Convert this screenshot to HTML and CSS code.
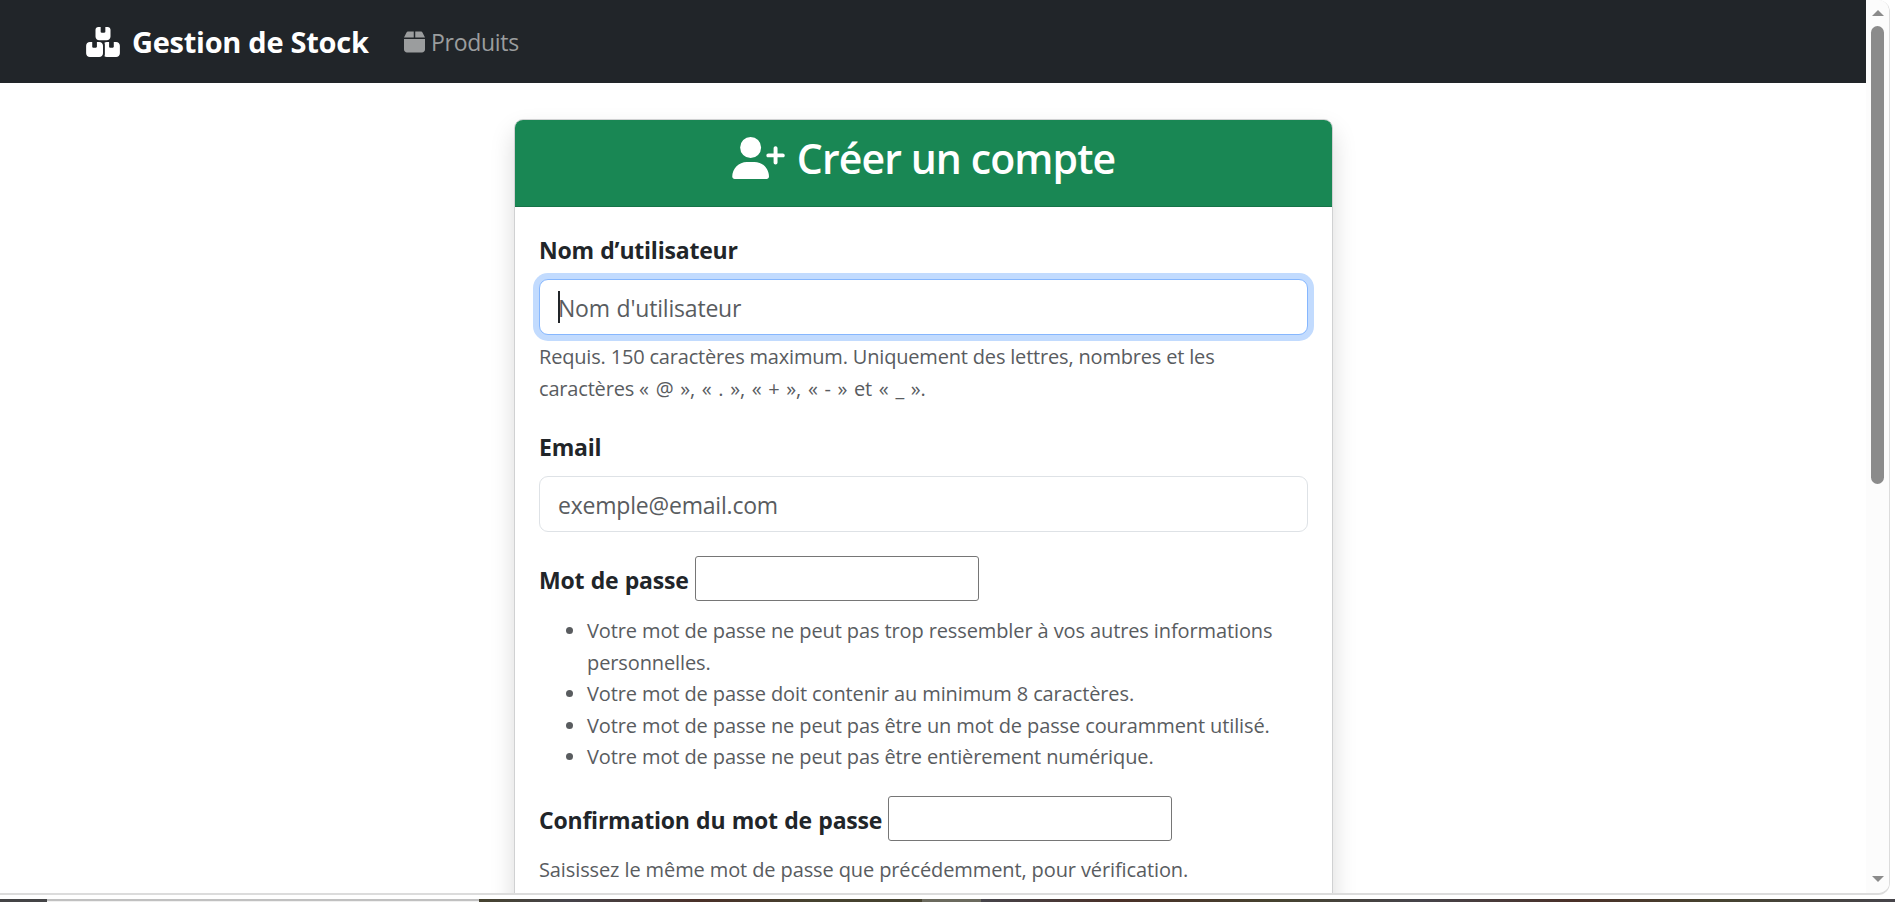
FILE: index.html
```html
<!DOCTYPE html>
<html lang="fr">
<head>
  <meta charset="UTF-8">
  <meta name="viewport" content="width=device-width, initial-scale=1.0">
  <title>Créer un compte</title>
  <link rel="stylesheet" href="styles.css">
</head>
<body>
  <div class="window">
    <div class="page">
      <nav class="navbar">
        <a class="navbar-brand" href="#">
          <svg class="icon-boxes" viewBox="0 0 576 512" fill="currentColor"><path d="M248 0H208c-26.5 0-48 21.5-48 48V160c0 35.3 28.7 64 64 64H352c35.3 0 64-28.7 64-64V48c0-26.5-21.5-48-48-48H328V80c0 8.8-7.2 16-16 16H264c-8.8 0-16-7.2-16-16V0zM64 256c-35.3 0-64 28.7-64 64V448c0 35.3 28.7 64 64 64H224c35.3 0 64-28.7 64-64V320c0-35.3-28.7-64-64-64H184v80c0 8.8-7.2 16-16 16H120c-8.8 0-16-7.2-16-16V256H64zM352 512H512c35.3 0 64-28.7 64-64V320c0-35.3-28.7-64-64-64H472v80c0 8.8-7.2 16-16 16H408c-8.8 0-16-7.2-16-16V256H352c-15 0-28.8 5.1-39.7 13.8c4.9 10.4 7.7 22 7.7 34.2V464c0 12.2-2.8 23.8-7.7 34.2C323.2 506.9 337 512 352 512z"/></svg>
          <span>Gestion de Stock</span>
        </a>
        <a class="nav-link" href="#">
          <svg class="icon-box" viewBox="0 0 448 512" fill="currentColor"><path d="M50.7 58.5L0 160H208V32H93.7C75.5 32 58.9 42.3 50.7 58.5zM240 160H448L397.3 58.5C389.1 42.3 372.5 32 354.3 32H240V160zm208 32H0V416c0 35.3 28.7 64 64 64H384c35.3 0 64-28.7 64-64V192z"/></svg>
          <span>Produits</span>
        </a>
      </nav>

      <main class="container">
        <div class="card">
          <div class="card-header">
            <svg class="icon-user" viewBox="0 0 640 512" fill="currentColor"><path d="M96 128a128 128 0 1 1 256 0A128 128 0 1 1 96 128zM0 482.3C0 383.8 79.8 304 178.3 304h91.4C368.2 304 448 383.8 448 482.3c0 16.4-13.3 29.7-29.7 29.7H29.7C13.3 512 0 498.7 0 482.3zM504 312V248H440c-13.3 0-24-10.7-24-24s10.7-24 24-24h64V136c0-13.3 10.7-24 24-24s24 10.7 24 24v64h64c13.3 0 24 10.7 24 24s-10.7 24-24 24H552v64c0 13.3-10.7 24-24 24s-24-10.7-24-24z"/></svg>
            <h3>Créer un compte</h3>
          </div>
          <form class="card-body">
            <div class="field">
              <label for="username">Nom d’utilisateur</label>
              <div class="input-wrap">
                <input class="form-control focused" type="text" id="username" placeholder="Nom d'utilisateur">
                <span class="caret"></span>
              </div>
              <div class="form-text hint">Requis. 150 caractères maximum. Uniquement des lettres, nombres et les<br>caractères <span class="symbols">«&nbsp;@&nbsp;», «&nbsp;.&nbsp;», «&nbsp;+&nbsp;», «&nbsp;-&nbsp;» et «&nbsp;_&nbsp;».</span></div>
            </div>

            <div class="field">
              <label for="email">Email</label>
              <input class="form-control" type="email" id="email" placeholder="exemple@email.com">
            </div>

            <div class="field">
              <div class="inline-field">
                <label for="password1">Mot de passe</label>
                <input class="plain-input" type="password" id="password1">
              </div>
              <ul class="form-text rules">
                <li>Votre mot de passe ne peut pas trop ressembler à vos autres informations<br>personnelles.</li>
                <li>Votre mot de passe doit contenir au minimum 8 caractères.</li>
                <li>Votre mot de passe ne peut pas être un mot de passe couramment utilisé.</li>
                <li>Votre mot de passe ne peut pas être entièrement numérique.</li>
              </ul>
            </div>

            <div class="field">
              <div class="inline-field">
                <label for="password2">Confirmation du mot de passe</label>
                <input class="plain-input" type="password" id="password2">
              </div>
              <div class="form-text confirm-text">Saisissez le même mot de passe que précédemment, pour vérification.</div>
            </div>
          </form>
        </div>
      </main>
    </div>

    <div class="scrollbar">
      <svg class="arrow" viewBox="0 0 12 6"><path d="M0 6L6 0L12 6z"/></svg>
      <div class="track"><div class="thumb"></div></div>
      <svg class="arrow" viewBox="0 0 12 6"><path d="M0 0L6 6L12 0z"/></svg>
    </div>
  </div>

  <div class="desktop">
    <div class="strip-start"></div>
    <div class="strip-light"></div>
    <div class="strip-dark"></div>
    <div class="strip-grey"></div>
    <div class="strip-end"></div>
  </div>
</body>
</html>
```

FILE: styles.css
```css
* {
  box-sizing: border-box;
}
body {
  margin: 0;
  height: 902px;
  overflow: hidden;
  display: flex;
  flex-direction: column;
  background-color: #fff;
  color: #212529;
  font-family: "Open Sans", "Noto Sans", sans-serif;
  font-size: 23px;
}

/* browser window */
.window {
  display: flex;
  width: 1890px;
  height: 895px;
  border-right: 1px solid #dcdcdc;
  border-bottom: 2px solid #dcdcdc;
  border-radius: 0 12px 12px 0;
  overflow: hidden;
}
.page {
  width: 1866px;
  height: 893px;
  overflow: hidden;
}

/* navbar */
.navbar {
  display: flex;
  align-items: center;
  height: 83px;
  padding-left: 86px;
  background-color: #212529;
}
.navbar a {
  display: flex;
  align-items: center;
  text-decoration: none;
  white-space: nowrap;
}
.navbar-brand {
  width: 318px;
  gap: 12px;
  color: #fff;
  font-size: 29px;
  font-weight: 700;
  letter-spacing: -0.27px;
}
.nav-link {
  gap: 6px;
  color: #9b9d9e;
  letter-spacing: -0.3px;
}
.icon-boxes {
  width: 34px;
  height: 30px;
}
.icon-box {
  width: 21px;
  height: 24px;
}

/* card */
.container {
  display: flex;
  justify-content: center;
  padding: 36px 19px 0 0;
}
.card {
  width: 819px;
  height: 1100px;
  border: 1px solid #d0d1d2;
  border-radius: 9px;
  box-shadow: 0 12px 24px rgba(0, 0, 0, 0.15);
}
.card-header {
  display: flex;
  justify-content: center;
  height: 87px;
  padding-top: 17px;
  gap: 12px;
  background-color: #198754;
  border-bottom: 1px solid #167348;
  border-radius: 8px 8px 0 0;
  color: #fff;
}
.card-header h3 {
  margin: 0;
  font-size: 41px;
  font-weight: 600;
  line-height: 43px;
  letter-spacing: -0.9px;
}
.icon-user {
  width: 53px;
  height: 42px;
}
.card-body {
  padding: 24px;
}
.field {
  margin-bottom: 24px;
}
label {
  display: block;
  margin-bottom: 11px;
  padding-top: 1px;
  font-size: 23px;
  font-weight: 700;
  line-height: 36px;
  letter-spacing: -0.21px;
  word-spacing: 0.6px;
  white-space: nowrap;
}
.input-wrap {
  position: relative;
}
.form-control {
  display: block;
  width: 100%;
  height: 56px;
  padding: 2px 18px 0;
  border: 1px solid #dee2e6;
  border-radius: 9px;
  outline: none;
  background-color: #fff;
  font-family: inherit;
  font-size: 23px;
  letter-spacing: -0.2px;
  word-spacing: 1px;
}
.form-control::placeholder {
  color: #595c5f;
}
.form-control.focused {
  border-color: #86b7fe;
  box-shadow: 0 0 0 6px #c2dbfe;
}
.caret {
  position: absolute;
  left: 19px;
  top: 12px;
  width: 2px;
  height: 32px;
  background-color: #212529;
}
.form-text {
  margin-top: 6px;
  color: #595c5f;
  font-size: 20px;
  line-height: 31.5px;
  letter-spacing: -0.11px;
  white-space: nowrap;
}
.form-text.hint {
  letter-spacing: -0.18px;
}
.symbols {
  word-spacing: 1.8px;
}
.inline-field {
  display: flex;
  gap: 6px;
}
.inline-field label {
  margin: 5px 0 0;
}
.plain-input {
  width: 284px;
  height: 45px;
  border: 1px solid #767676;
  border-radius: 3px;
  background-color: #fff;
}
.form-text.rules {
  margin: 14px 0 -0.5px;
  padding-left: 48px;
}
.form-text.confirm-text {
  margin-top: 13px;
}

/* scrollbar */
.scrollbar {
  display: flex;
  flex-direction: column;
  align-items: center;
  width: 23px;
  padding: 10px 0 11px;
  background-color: #fcfcfc;
}
.arrow {
  width: 12px;
  height: 6px;
  fill: #8b8b8b;
}
.track {
  flex: 1;
  padding-top: 10px;
}
.thumb {
  width: 13px;
  height: 458px;
  border-radius: 7px;
  background-color: #8b8b8b;
}

/* strip under the window */
.desktop {
  display: flex;
  height: 3px;
  margin-top: 4px;
}
.strip-start {
  width: 47px;
  background-color: #444446;
}
.strip-light {
  width: 432px;
  border-top: 2px solid #c0c0c0;
  background-color: #f0f0f0;
}
.strip-dark {
  width: 443px;
  background: linear-gradient(90deg, #46422f, #46444a 20%, #4a3028 50%, #46422f 75%);
}
.strip-grey {
  width: 59px;
  background-color: #6b6a5e;
}
.strip-end {
  flex: 1;
  background: linear-gradient(90deg, #46444a, #4a3028 15%, #46422f 32%, #46444a 48%, #4a3028 65%, #46422f 80%, #46444a);
}
```
